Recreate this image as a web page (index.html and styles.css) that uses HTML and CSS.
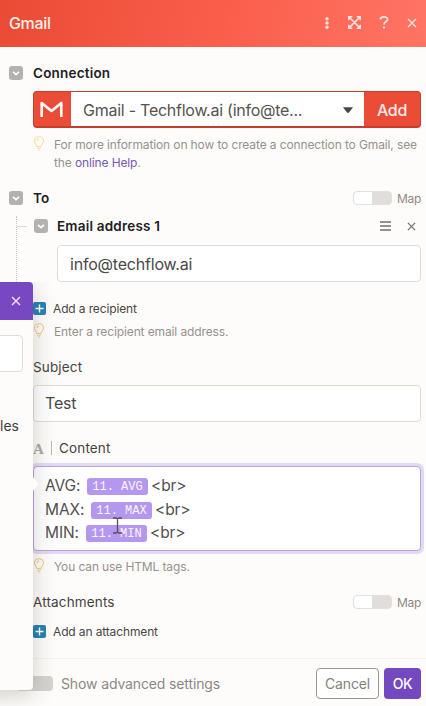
FILE: index.html
```html
<!DOCTYPE html>
<html lang="en">
<head>
<meta charset="utf-8">
<title>Gmail</title>
<link rel="stylesheet" href="styles.css">
</head>
<body>
<svg class="defs" width="0" height="0">
  <symbol id="chev" viewBox="0 0 14 14"><path d="M4 5.8 7 8.6 10 5.8" fill="none" stroke="#fff" stroke-width="1.6"/></symbol>
  <symbol id="bulb" viewBox="0 0 12 15"><path d="M4 10.5C4 8.5 1.5 7.8 1.5 5a4.5 4.3 0 0 1 9 0c0 2.8-2.5 3.5-2.5 5.5zM4.2 12.3h3.6M5 14h2M4 4.8Q4.3 3.3 6 3" fill="none" stroke="currentColor" stroke-width="1.1"/></symbol>
  <symbol id="plus" viewBox="0 0 13 13"><path d="M6.5 2.5v8M2.5 6.5h8" stroke="#fff" stroke-width="1.4"/></symbol>
  <symbol id="close" viewBox="0 0 10 10"><path d="M1 1l8 8M9 1 1 9" fill="none" stroke="currentColor" stroke-width="1.4"/></symbol>
</svg>
<div class="panel">
  <header class="header">
    <h1 class="title">Gmail</h1>
    <svg class="dots" width="4" height="12" viewBox="0 0 4 12" fill="currentColor"><circle cx="2" cy="1.8" r="1.7"/><circle cx="2" cy="6" r="1.7"/><circle cx="2" cy="10.2" r="1.7"/></svg>
    <svg class="expand" width="13" height="13" viewBox="0 0 13 13" fill="none" stroke="currentColor" stroke-width="1.6"><path d="M.8 4.3V.8h3.500M8.700.8h3.500v3.500M12.200 8.700v3.500H8.700M4.300 12.200H.8V8.700M1 1l11 11M12 1 1 12"/></svg>
    <svg class="help" width="10" height="13" viewBox="0 0 10 13" fill="none" stroke="currentColor" stroke-width="1.8"><path d="M1.3 3.5C1.5 1.7 3 .9 4.9.9c2.2 0 3.7 1 3.7 2.7C8.6 5.700 5 5.600 5 8.600M5 10.600v2"/></svg>
    <svg class="x" width="10" height="10"><use href="#close"/></svg>
  </header>
  <main class="form">
    <div class="row connection"><svg class="toggle"><use href="#chev"/></svg><b>Connection</b></div>
    <div class="select">
      <div class="brand"><svg width="23" height="17" viewBox="0 0 23 17"><path d="M1.700 16V2l9.800 8 9.800-8v14" fill="none" stroke="#fff" stroke-width="2.600" stroke-linejoin="round"/></svg></div>
      <div class="value"><span>Gmail - Techflow.ai (info@te...</span><svg width="10" height="6" viewBox="0 0 10 6"><path d="M0 .3h10L6 5.500q-1 .9-2 0z" fill="#454545"/></svg></div>
      <div class="add">Add</div>
    </div>
    <div class="hint pale connection-hint"><svg class="bulb"><use href="#bulb"/></svg><p>For more information on how to create a connection to Gmail, see<br>the <a>online Help</a>.</p></div>
    <div class="row to"><svg class="toggle"><use href="#chev"/></svg><b>To</b><span class="map"><i class="switch"></i>Map</span></div>
    <div class="tree">
      <div class="row email"><svg class="toggle"><use href="#chev"/></svg><b>Email address 1</b><svg class="menu" width="11" height="10" viewBox="0 0 11 10"><path d="M0 1h11M0 5h11M0 9h11" stroke="#716f6d" stroke-width="1.300"/></svg><svg class="remove" width="9" height="9" viewBox="0 0 10 10"><use href="#close"/></svg></div>
      <div class="input email-input">info@techflow.ai</div>
    </div>
    <div class="action recipient"><svg class="plus"><use href="#plus"/></svg>Add a recipient</div>
    <div class="hint recipient-hint"><svg class="bulb"><use href="#bulb"/></svg><p>Enter a recipient email address.</p></div>
    <div class="label subject">Subject</div>
    <div class="input subject-input">Test</div>
    <div class="label content"><span class="letter">A</span><span class="content-text">Content</span></div>
    <div class="editor">
      <div class="line avg"><span>AVG:</span><code>11. AVG</code><em>&lt;br&gt;</em></div>
      <div class="line max"><span>MAX:</span><code>11. MAX</code><em>&lt;br&gt;</em></div>
      <div class="line min"><span>MIN:</span><code>11. MIN</code><em>&lt;br&gt;</em></div>
      <svg class="cursor" width="11" height="17" viewBox="0 0 11 17"><path d="M1 1h3l1.500 1L7 1h3M5.500 2v13M1 16h3l1.500-1L7 16h3" fill="none" stroke="#555058" stroke-width="1.300"/></svg>
    </div>
    <div class="hint tags-hint"><svg class="bulb"><use href="#bulb"/></svg><p>You can use HTML tags.</p></div>
    <div class="label attachments">Attachments<span class="map"><i class="switch"></i>Map</span></div>
    <div class="action attach"><svg class="plus"><use href="#plus"/></svg>Add an attachment</div>
  </main>
  <footer class="footer"><i class="advanced-switch"></i><span class="advanced">Show advanced settings</span><div class="btn cancel">Cancel</div><div class="btn ok">OK</div></footer>
  <aside class="drawer">
    <div class="drawer-head"><svg width="10" height="10"><use href="#close"/></svg></div>
    <div class="drawer-search"></div>
    <div class="drawer-text">les</div>
    <i class="pointer"></i>
  </aside>
</div>
</body>
</html>
```
FILE: styles.css
```css
* { box-sizing: border-box; }
body { margin: 0; font-family: Inter, sans-serif; color: #2d2b2a; }
svg { display: block; flex: none; }
i, em { font-style: normal; }
p { margin: 0; }
.defs { position: absolute; }
.panel { position: relative; width: 426px; height: 706px; overflow: hidden; background: #fefcfa; display: flex; flex-direction: column; }

.header { height: 47px; flex: none; display: flex; align-items: center; padding: 0 9px 2px 9px; color: #ffe3dc; background: linear-gradient(100deg, #e94b35 0%, #fa5d4a 50%, #ff7464 100%); }
.title { margin: 0 auto 0 0; font-size: 16px; font-weight: 500; letter-spacing: -.35px; color: #fff0eb; }
.expand { margin-left: 19px; }
.help { margin-left: 18px; }
.x { margin-left: 18px; }

.form { flex: none; height: 612px; padding: 16px 5px 0 33px; border-bottom: 1px solid #f7f1ec; }
.row { display: flex; align-items: center; height: 20px; font-size: 13.5px; color: #20201f; }
.row b { font-weight: 600; letter-spacing: .2px; }
.toggle { width: 14px; height: 14px; margin-right: 10px; border-radius: 3px; background: #b5b1ae; }
.connection, .to { margin-left: -24px; }

.select { display: flex; height: 37px; margin-top: 8px; border: 1px solid #c93d2b; border-bottom-width: 2px; border-radius: 4px; background: #eb4c38; overflow: hidden; }
.brand { width: 37px; padding-right: 2px; display: flex; align-items: center; justify-content: center; }
.value { width: 293px; background: #fff; display: flex; align-items: center; justify-content: space-between; padding: 2px 11px 0 12px; font-size: 16px; color: #555250; letter-spacing: -.25px; }
.add { flex: 1; display: flex; align-items: center; justify-content: center; padding-top: 2px; color: #ffebe7; font-size: 16px; font-weight: 500; letter-spacing: -.3px; }

.hint { display: flex; height: 18px; font-size: 12px; line-height: 18px; letter-spacing: -.12px; color: #96918e; }
.hint p { margin-left: 9px; white-space: nowrap; }
.hint a { color: #7657b5; }
.bulb { width: 12px; height: 15px; color: #f4cc88; }
.pale .bulb { color: #f5df9f; }
.connection-hint { height: 36px; margin-top: 8px; }
.to { margin-top: 16px; }
.map { margin-left: auto; display: flex; align-items: center; gap: 5px; font-size: 12px; font-weight: 400; letter-spacing: -.35px; color: #8e8986; }
.switch { width: 39px; height: 14px; border: 1px solid #e3dfdc; border-radius: 4px; background: linear-gradient(90deg, #fff 18px, #e0ddda 18px); }

.tree { margin: 8px 0 0 -17px; padding-left: 17px; height: 66px; background: linear-gradient(#dcd8d2, #dcd8d2) 0 10px / 10px 1px no-repeat; border-left: 1px dotted #cbc9c2; }
.email .toggle { margin-right: 9px; }
.menu { margin-left: auto; }
.remove { margin: 0 5px 0 16px; color: #716f6d; }
.input { height: 37px; display: flex; align-items: center; border: 1px solid #e2dbd4; border-radius: 4px; background: #fff; padding: 0 12px; color: #4b4846; font-size: 16px; letter-spacing: -.2px; }
.email-input { margin: 9px 0 0 23px; }

.action { display: flex; align-items: center; height: 20px; font-size: 12px; letter-spacing: -.13px; color: #494644; }
.plus { width: 13px; height: 13px; margin-right: 7px; border-radius: 2px; background: #2882b4; }
.recipient { margin-top: 16px; }
.recipient-hint { margin-top: 5px; }
.label { display: flex; align-items: center; height: 20px; font-size: 13.5px; letter-spacing: .15px; color: #454240; }
.subject { margin-top: 16px; }
.subject-input { margin-top: 8px; padding: 0 11px 1px; }
.content { margin-top: 16px; }
.letter { width: 19px; height: 14px; border-right: 1px solid #bbb8b6; font: bold 15px/16px "Liberation Serif", serif; color: #aaa9a5; }
.content-text { margin-left: 7px; }
.editor { position: relative; height: 85px; margin-top: 8px; padding: 7px 11px; border: 1px solid #b8a5de; border-radius: 4px; background: #fff; box-shadow: 0 0 0 3px #e4d9f2; }
.line { display: flex; align-items: center; height: 23.5px; font-size: 15.5px; letter-spacing: -.1px; color: #524f50; }
.line code { height: 17px; width: 61px; margin-top: 2px; border-radius: 3px; background: #b498f0; color: #fcf4ff; font: 12px/18px "Liberation Mono", monospace; letter-spacing: 0; text-align: center; white-space: nowrap; }
.line em { margin-left: 3px; }
.avg span { width: 42px; }
.max span { width: 46px; }
.min span { width: 41px; }
.cursor { position: absolute; left: 78px; top: 50px; }
.tags-hint { margin-top: 7px; }
.attachments { margin-top: 16px; }
.attach { margin-top: 9px; }

.footer { flex: 1; display: flex; align-items: center; padding: 2px 5px 0 16px; }
.advanced-switch { width: 37px; height: 15px; border-radius: 4px; background: #d6d2d0; }
.advanced { margin-left: 8px; font-size: 14px; letter-spacing: -.13px; color: #8d8885; }
.btn { height: 31px; display: flex; align-items: center; justify-content: center; border-radius: 4px; font-size: 14px; }
.cancel { width: 63px; margin-left: auto; border: 1px solid #9a9592; background: #fff; color: #85807d; letter-spacing: -.15px; }
.ok { width: 37px; margin-left: 5px; background: #7448bf; color: #fff; font-weight: 500; letter-spacing: -.4px; }

.drawer { position: absolute; left: -60px; top: 282px; width: 93px; height: 408px; border-radius: 4px; background: #fefcfb; box-shadow: 0 5px 22px rgba(30, 40, 30, .22); clip-path: inset(0 -35px -35px 0); }
.drawer-head { height: 38px; display: flex; align-items: center; justify-content: flex-end; padding-right: 12px; border-radius: 4px 4px 0 0; background: #7848c2; color: #f4e6ff; }
.drawer-search { width: 83px; height: 37px; margin-top: 15px; border: 1px solid #e2ddd7; border-radius: 4px; background: #fff; }
.drawer-text { margin: 45px 14px 0 0; font-size: 14px; line-height: 18px; text-align: right; color: #3e3b3a; }
.pointer { position: absolute; left: 92px; top: 194px; width: 7px; height: 16px; background: #fefcfb; clip-path: polygon(0 0, 100% 50%, 0 100%); }
```
